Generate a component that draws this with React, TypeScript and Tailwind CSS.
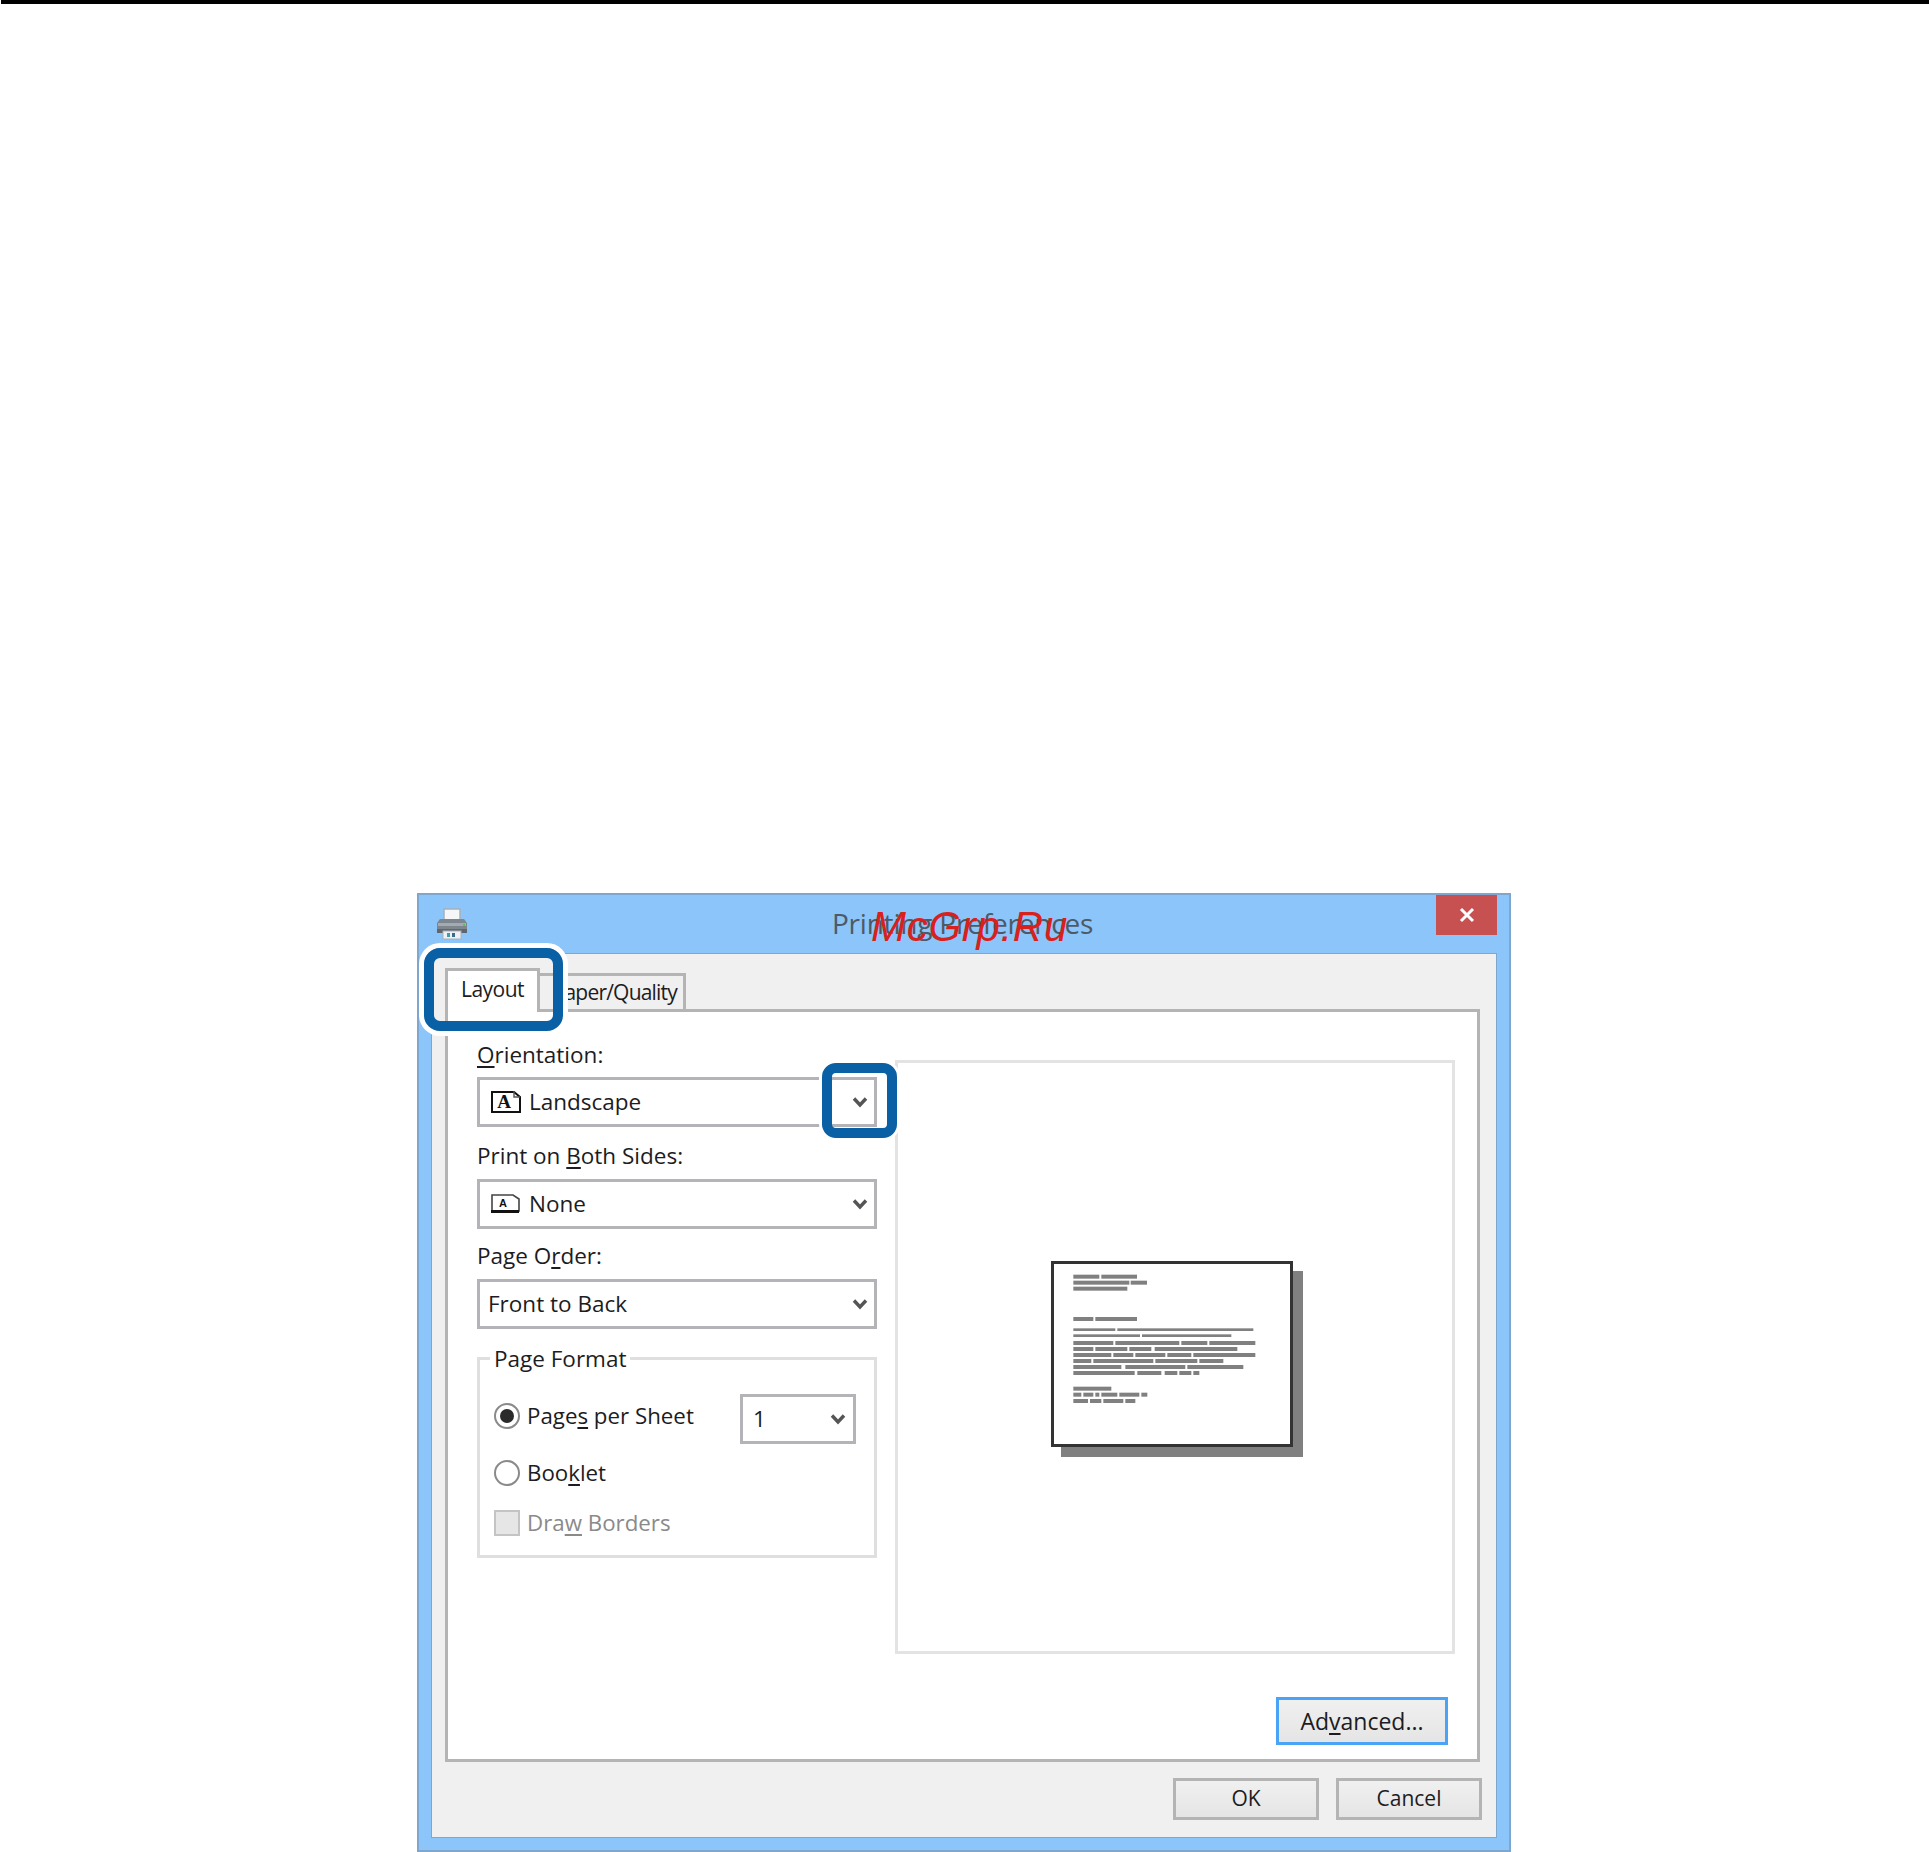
const FONT = "font-['Open_Sans','Noto_Sans',sans-serif]";

function Chevron() {
  return (
    <svg width="16" height="12" viewBox="0 0 16 12" className="shrink-0">
      <path d="M2 2.5 L8 9 L14 2.5" fill="none" stroke="#555555" strokeWidth="3.4" />
    </svg>
  );
}

function PrinterIcon() {
  return (
    <svg width="34" height="32" viewBox="0 0 34 32" className="shrink-0">
      <rect x="9" y="1" width="16" height="11" fill="#f4f6f8" stroke="#a9b0b8" strokeWidth="1.5" />
      <path d="M5 11 H29 L32 15 V25 H2 V15 Z" fill="#7d858d" />
      <rect x="3" y="15" width="28" height="3" fill="#a3aab1" />
      <rect x="2" y="21" width="30" height="4" fill="#5f666d" />
      <rect x="28" y="16" width="2" height="2" fill="#58c25a" />
      <rect x="8" y="23" width="18" height="8" fill="#eef1f3" stroke="#a9b0b8" strokeWidth="1" />
      <rect x="12" y="25" width="3" height="4" fill="#3d9ca8" />
      <rect x="17" y="25" width="3" height="4" fill="#3d6a8a" />
    </svg>
  );
}

function LandscapeIcon() {
  return (
    <svg width="30" height="24" viewBox="0 0 30 24" className="shrink-0">
      <path d="M1 2 H23 L29 7 V22 H1 Z" fill="#ffffff" stroke="#111111" strokeWidth="2" />
      <path d="M23 1 V7 H29" fill="none" stroke="#555555" strokeWidth="1.4" />
      <text x="13" y="18" textAnchor="middle" fontFamily="Liberation Serif, serif" fontWeight="700" fontSize="19" fill="#111111">
        A
      </text>
    </svg>
  );
}

function DuplexIcon() {
  return (
    <svg width="30" height="20" viewBox="0 0 30 20" className="shrink-0">
      <path d="M1 1 H22 L28 5 V17 H1 Z" fill="#ffffff" stroke="#444444" strokeWidth="1.6" />
      <rect x="0" y="16" width="28" height="3" fill="#111111" />
      <text x="12" y="13" textAnchor="middle" fontFamily="Liberation Sans, sans-serif" fontWeight="700" fontSize="11" fill="#111111">
        A
      </text>
    </svg>
  );
}

function Combo({ icon, label }: { icon?: React.ReactNode; label: string }) {
  return (
    <div className="flex h-[50px] items-center border-[3px] border-[#b4b4b8] bg-white pr-[6px] pl-[8px]">
      {icon ? <span className="mr-[8px] ml-[3px] flex">{icon}</span> : null}
      <span className="flex-1 text-[22.5px] text-[#1c1c22]">{label}</span>
      <Chevron />
    </div>
  );
}

function FieldLabel({ children }: { children: React.ReactNode }) {
  return <div className="flex h-[34px] items-center text-[22.5px] text-[#1c1c22]">{children}</div>;
}

function Key({ children }: { children: React.ReactNode }) {
  return <span className="underline decoration-[2px] underline-offset-[3px]">{children}</span>;
}

function Radio({ checked }: { checked?: boolean }) {
  return (
    <span className="flex h-[26px] w-[26px] shrink-0 items-center justify-center rounded-full border-[2px] border-[#8a8a8a] bg-white">
      {checked ? <span className="h-[14px] w-[14px] rounded-full bg-[#2a2a2a]" /> : null}
    </span>
  );
}

function PushButton({ className, children }: { className: string; children: React.ReactNode }) {
  return (
    <div
      className={`flex items-center justify-center bg-gradient-to-b from-[#f0f0f0] to-[#e5e5e5] text-[#1c1c22] ${className}`}
    >
      {children}
    </div>
  );
}

// [y, height, x1, x2, ...] in the preview's own units, each pair one run of "text"
const PREVIEW_LINES: number[][] = [
  [110, 12, 160, 238, 244, 351],
  [128, 12, 160, 328, 332, 381],
  [146, 12, 160, 322],
  [237, 12, 160, 220, 226, 351],
  [269, 8, 160, 286, 292, 700],
  [287, 8, 160, 360, 366, 634],
  [309, 12, 160, 280, 286, 478, 484, 562, 568, 706],
  [327, 12, 160, 220, 226, 322, 328, 394, 404, 652],
  [345, 12, 160, 274, 280, 340, 346, 436, 442, 514, 520, 706],
  [363, 12, 160, 214, 220, 400, 406, 532, 538, 610],
  [381, 12, 160, 304, 316, 496, 502, 670],
  [399, 12, 160, 344, 352, 424, 434, 472, 478, 514, 520, 538],
  [446, 12, 160, 274],
  [464, 12, 160, 184, 190, 220, 226, 238, 244, 292, 298, 358, 364, 382],
  [483, 12, 160, 204, 210, 244, 250, 310, 316, 346],
];

function PreviewPage() {
  return (
    <div className="h-[186px] w-[242px] border-[3px] border-[#333333] bg-white shadow-[10px_10px_0_#808080]">
      <svg width="236" height="180" viewBox="102 72 708 540" className="block">
        {PREVIEW_LINES.map(([y, h, ...runs]) =>
          runs
            .filter((_, i) => i % 2 === 0)
            .map((x1, i) => (
              <rect key={`${y}-${x1}`} x={x1} y={y - h / 2} width={runs[i * 2 + 1] - x1} height={h} fill="#808080" />
            )),
        )}
      </svg>
    </div>
  );
}

export default function App() {
  return (
    <div className={`relative h-[1852px] w-[1929px] overflow-hidden bg-white ${FONT}`}>
      <div className="ml-[1px] h-[4px] bg-black" />

      {/* dialog */}
      <div className="mt-[889px] ml-[417px] h-[959px] w-[1094px] border-[2px] border-[#7fa6cc] bg-[#8bc5fa]">
        <div className="relative flex h-[58px] items-center pl-[16px]">
          <PrinterIcon />
          <div className="flex-1 pb-[2px] pl-[20px] text-center text-[28px] tracking-[-0.2px] text-[#4d5a66]">Printing Preferences</div>
          <div className="mr-[12px] flex h-[40px] w-[61px] items-center justify-center self-start bg-[#c75050]">
            <svg width="16" height="16" viewBox="0 0 16 16">
              <path d="M2 2 L14 14 M14 2 L2 14" stroke="#ffffff" strokeWidth="3" />
            </svg>
          </div>
        </div>

        <div className="mx-[12px] flex h-[885px] flex-col border border-[#7fa6cc] bg-[#f0f0f0] pt-[15px] pr-[16px] pl-[13px]">
          <div className="flex h-[40px] items-end">
            <div className="relative z-10 -mb-[3px] flex h-[44px] w-[95px] items-center justify-center border-[3px] border-b-0 border-[#b4b4b4] bg-white pb-[4px] text-[21px] tracking-[-0.5px] text-[#1c1c22]">
              Layout
            </div>
            <div className="flex h-[36px] w-[146px] items-center justify-end border-[3px] border-b-0 border-l-0 border-[#b4b4b4] pt-[1px] pr-[6px] text-[21px] tracking-[-0.8px] text-[#1c1c22]">
              Paper/Quality
            </div>
          </div>

          <div className="flex h-[753px] flex-col border-[3px] border-[#b4b4b4] bg-white pr-[21px] pl-[29px]">
            <div className="flex items-start">
              <div className="mt-[25px] w-[400px]">
                <FieldLabel>
                  <span className="translate-y-[1px]">
                    <Key>O</Key>rientation:
                  </span>
                </FieldLabel>
                <div className="mt-[6px]">
                  <Combo icon={<LandscapeIcon />} label="Landscape" />
                </div>
                <div className="mt-[12px]">
                  <FieldLabel>
                    <span>
                      Print on <Key>B</Key>oth Sides:
                    </span>
                  </FieldLabel>
                </div>
                <div className="mt-[6px]">
                  <Combo icon={<DuplexIcon />} label="None" />
                </div>
                <div className="mt-[10px]">
                  <FieldLabel>
                    <span>
                      Page O<Key>r</Key>der:
                    </span>
                  </FieldLabel>
                </div>
                <div className="mt-[6px]">
                  <Combo label="Front to Back" />
                </div>

                <div className="relative mt-[28px] h-[201px] border-[3px] border-[#dfdfdf] pt-[34px] pr-[18px] pl-[14px]">
                  <span className="absolute -top-[18px] left-[10px] bg-white px-[4px] text-[22.5px] text-[#1c1c22]">Page Format</span>
                  <div className="flex items-center">
                    <div className="mb-[6px] flex flex-1 items-center">
                      <Radio checked />
                      <span className="ml-[7px] text-[22.3px] text-[#1c1c22]">
                        Page<Key>s</Key> per Sheet
                      </span>
                    </div>
                    <div className="flex h-[50px] w-[116px] items-center justify-between border-[3px] border-[#b4b4b8] pr-[7px] pl-[10px] text-[22.5px] text-[#1c1c22]">
                      1
                      <Chevron />
                    </div>
                  </div>
                  <div className="mt-[12px] flex items-center">
                    <Radio />
                    <span className="ml-[7px] text-[22.3px] text-[#1c1c22]">
                      Boo<Key>k</Key>let
                    </span>
                  </div>
                  <div className="mt-[17px] flex items-center">
                    <span className="h-[26px] w-[26px] shrink-0 border-[2px] border-[#c4c4c4] bg-[#e6e6e6]" />
                    <span className="ml-[7px] text-[22.3px] text-[#8a8a8a]">
                      Dra<Key>w</Key> Borders
                    </span>
                  </div>
                </div>
              </div>

              <div className="mt-[48px] ml-[18px] flex h-[594px] w-[560px] items-center border-[3px] border-[#e3e3e3] pl-[153px]">
                <div className="-mt-[6px]">
                  <PreviewPage />
                </div>
              </div>
            </div>

            <div className="mt-[43px] flex justify-end pr-[8px]">
              <PushButton className="h-[48px] w-[172px] border-[3px] border-[#4aa3f5] text-[23px]">
                <span>
                  Ad<Key>v</Key>anced...
                </span>
              </PushButton>
            </div>
          </div>

          <div className="-mr-[2px] mt-[16px] flex justify-end gap-[17px]">
            <PushButton className="h-[42px] w-[146px] border-[3px] border-[#b4b4b4] text-[21px]">OK</PushButton>
            <PushButton className="h-[42px] w-[146px] border-[3px] border-[#b4b4b4] text-[21px]">Cancel</PushButton>
          </div>
        </div>
      </div>

      {/* watermark and callouts lying over the screenshot */}
      <span className="absolute top-[901px] left-[871px] font-['Liberation_Sans',sans-serif] text-[42px] leading-[52px] tracking-[0.7px] text-[#d8201c] italic">
        McGrp.Ru
      </span>
      <div className="absolute top-[948px] left-[424px] h-[83px] w-[139px] rounded-[16px] border-[10px] border-[#0a60a5] shadow-[0_0_0_5px_#ffffff]" />
      <div className="absolute top-[1063px] left-[822px] h-[75px] w-[75px] rounded-[14px] border-[10px] border-[#0a60a5] shadow-[0_0_0_3px_#ffffff]" />
    </div>
  );
}
